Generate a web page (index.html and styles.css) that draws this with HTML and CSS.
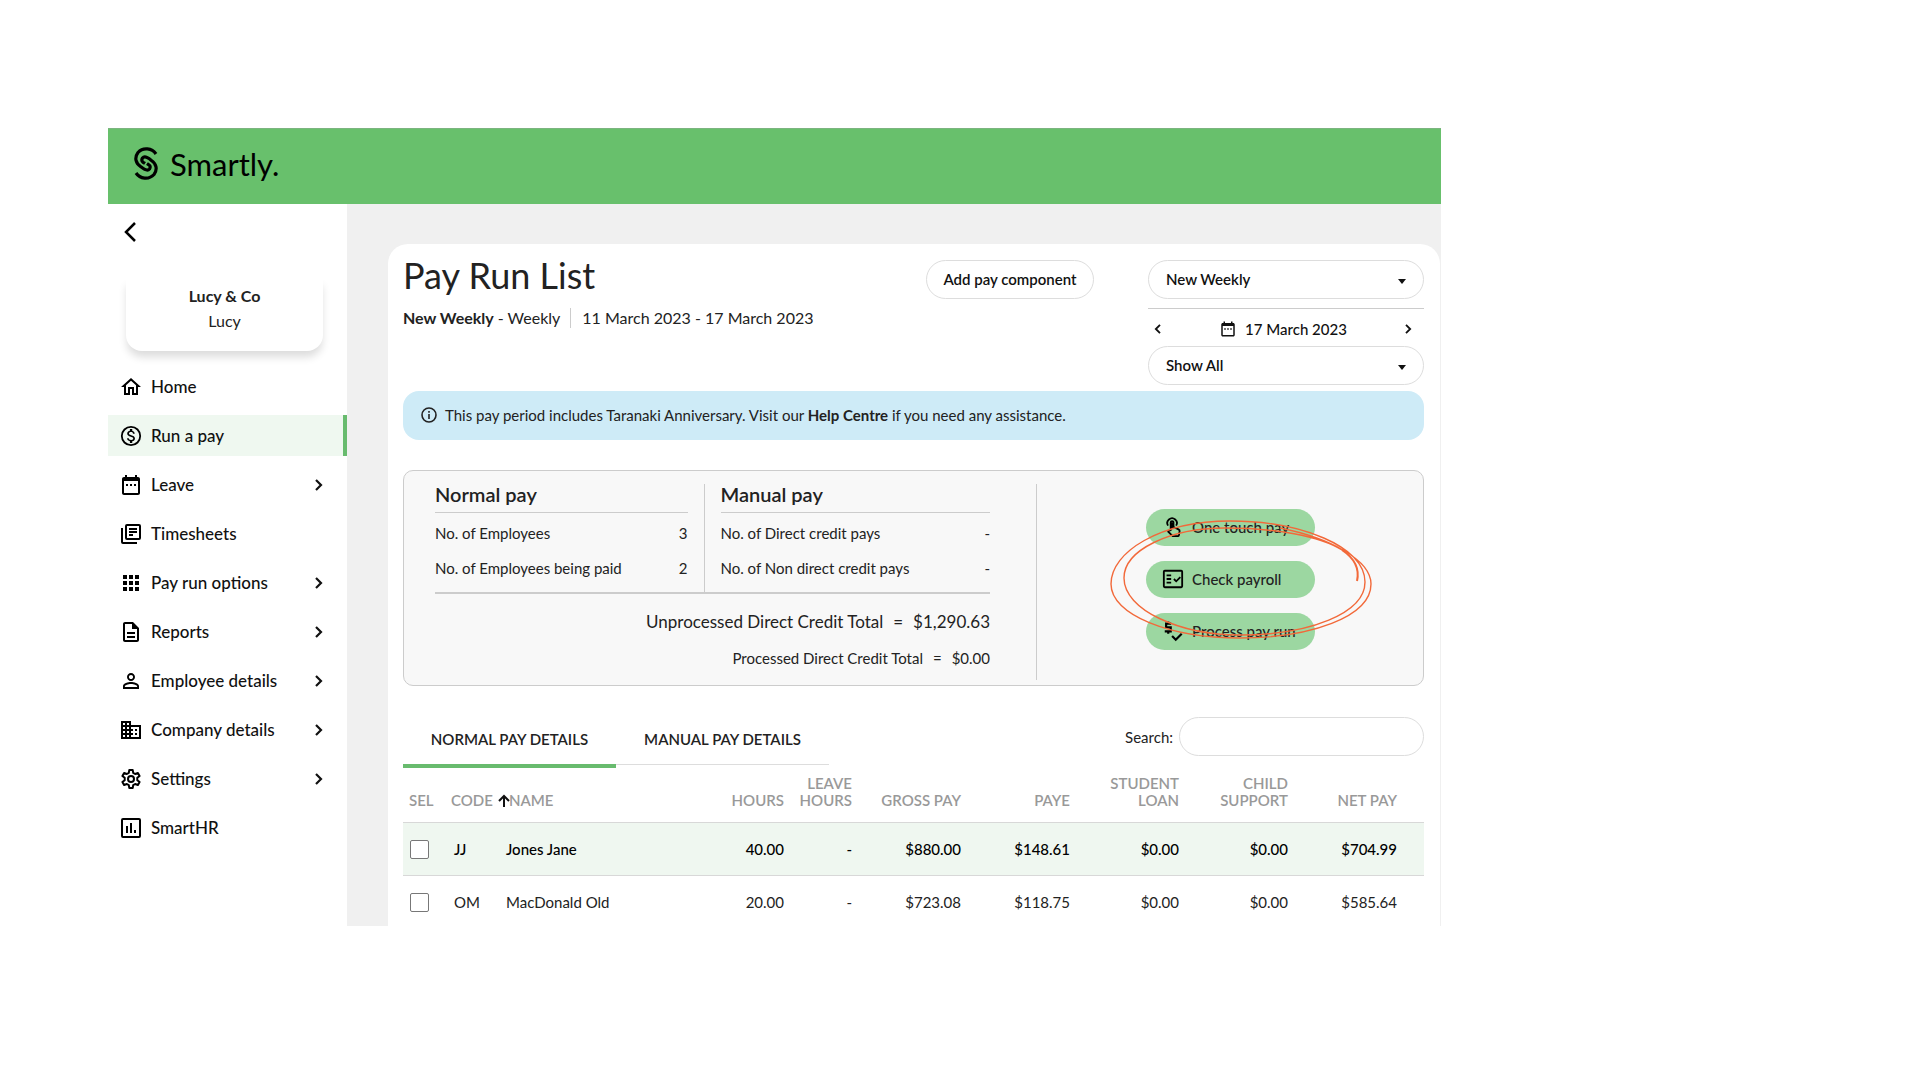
FILE: index.html
```html
<!DOCTYPE html>
<html lang="en">
<head>
<meta charset="utf-8">
<meta name="viewport" content="width=device-width, initial-scale=1">
<title>Pay Run List - Smartly</title>
<link rel="stylesheet" href="styles.css">
</head>
<body>
<svg class="defs" aria-hidden="true">
  <symbol id="chevron" viewBox="0 0 8 12"><path d="M1 1l5 5-5 5" fill="none" stroke="currentColor" stroke-width="2.2"/></symbol>
  <symbol id="caret" viewBox="0 0 8 5"><path d="M0 0h8L4 5z"/></symbol>
  <symbol id="calendar" viewBox="0 0 24 24"><path d="M9 11H7v2h2v-2zm4 0h-2v2h2v-2zm4 0h-2v2h2v-2zM19 4h-1V2h-2v2H8V2H6v2H5c-1.100 0-2 .9-2 2v14c0 1.100.9 2 2 2h14c1.100 0 2-.9 2-2V6c0-1.100-.9-2-2-2zM19 20H5V8h14v12z"/></symbol>
</svg>
<div class="app">
  <header class="topbar">
    <a class="brand" href="#">
      <svg class="brand-mark" viewBox="0 0 24 33" fill="none" stroke="currentColor" stroke-width="3.2" aria-hidden="true">
        <path d="M22 7C18 1 9 0 4 5.500C0 11 2 16.500 6.500 19.500C9 21.500 13 25 15.500 22C17.500 19 14.500 17.500 13 16.500"/>
        <path d="M2 26C6 32 15 33 20 27.500C24 22 22 16.500 17.500 13.500C15 11.500 11 8 8.500 11C6.500 14 9.500 15.500 11 16.500"/>
      </svg>
      <span>Smartly.</span>
    </a>
  </header>
  <div class="body">
    <aside class="sidebar">
      <button class="back" type="button" aria-label="Back">
        <svg viewBox="0 0 12 20" aria-hidden="true"><path d="M11 1L2 10l9 9" fill="none" stroke="currentColor" stroke-width="2.500"/></svg>
      </button>
      <div class="account"><strong>Lucy &amp; Co</strong><span>Lucy</span></div>
      <nav class="menu">
        <a href="#"><svg class="icon" viewBox="0 0 24 24"><path d="M12 5.690l5 4.500V18h-2v-6H9v6H7v-7.810l5-4.500M12 3L2 12h3v8h6v-6h2v6h6v-8h3L12 3z"/></svg><span>Home</span></a>
        <a href="#" class="active" aria-current="page"><svg class="icon" viewBox="0 0 24 24"><circle cx="12" cy="12" r="9.200" fill="none" stroke="currentColor" stroke-width="1.800"/><path d="M12.310 11.140c-1.770-.45-2.340-.94-2.340-1.670 0-.84.79-1.430 2.100-1.430 1.380 0 1.900.66 1.940 1.640h1.710c-.05-1.340-.87-2.570-2.490-2.970V5H10.900v1.690c-1.510.32-2.720 1.300-2.720 2.810 0 1.790 1.490 2.690 3.660 3.210 1.950.46 2.340 1.150 2.340 1.870 0 .53-.39 1.390-2.100 1.390-1.600 0-2.230-.72-2.320-1.640H8.040c.1 1.700 1.360 2.660 2.860 2.970V19h2.340v-1.670c1.520-.29 2.720-1.160 2.730-2.770-.01-2.200-1.900-2.960-3.660-3.420z"/></svg><span>Run a pay</span></a>
        <a href="#"><svg class="icon" viewBox="0 0 24 24"><use href="#calendar"/></svg><span>Leave</span><svg class="chevron"><use href="#chevron"/></svg></a>
        <a href="#"><svg class="icon" viewBox="0 0 24 24" fill="none" stroke="currentColor" stroke-width="2"><rect x="7" y="3" width="14" height="14" rx="1"/><path d="M3 6v14q0 1 1 1h14M10 7h8M10 10h8M10 13h4"/></svg><span>Timesheets</span></a>
        <a href="#"><svg class="icon" viewBox="0 0 24 24"><path d="M4 4h4v4H4zM10 4h4v4h-4zM16 4h4v4h-4zM4 10h4v4H4zM10 10h4v4h-4zM16 10h4v4h-4zM4 16h4v4H4zM10 16h4v4h-4zM16 16h4v4h-4z"/></svg><span>Pay run options</span><svg class="chevron"><use href="#chevron"/></svg></a>
        <a href="#"><svg class="icon" viewBox="0 0 24 24"><path d="M8 16h8v2H8zm0-4h8v2H8zm6-10H6c-1.100 0-2 .9-2 2v16c0 1.100.89 2 2 2h12c1.100 0 2-.9 2-2V8l-6-6zm4 18H6V4h7v5h5v11z"/></svg><span>Reports</span><svg class="chevron"><use href="#chevron"/></svg></a>
        <a href="#"><svg class="icon" viewBox="0 0 24 24"><path d="M12 5.900c1.160 0 2.100.94 2.100 2.100s-.94 2.100-2.100 2.100S9.900 9.160 9.900 8s.94-2.100 2.100-2.100m0 9c2.970 0 6.100 1.460 6.100 2.100v1.100H5.900V17c0-.64 3.130-2.100 6.100-2.100M12 4C9.790 4 8 5.790 8 8s1.790 4 4 4 4-1.790 4-4-1.790-4-4-4zm0 9c-2.670 0-8 1.340-8 4v3h16v-3c0-2.660-5.330-4-8-4z"/></svg><span>Employee details</span><svg class="chevron"><use href="#chevron"/></svg></a>
        <a href="#"><svg class="icon" viewBox="0 0 24 24"><path d="M12 7V3H2v18h20V7H12zM6 19H4v-2h2v2zm0-4H4v-2h2v2zm0-4H4V9h2v2zm0-4H4V5h2v2zm4 12H8v-2h2v2zm0-4H8v-2h2v2zm0-4H8V9h2v2zm0-4H8V5h2v2zm10 12h-8v-2h2v-2h-2v-2h2v-2h-2V9h8v10zm-2-8h-2v2h2v-2zm0 4h-2v2h2v-2z"/></svg><span>Company details</span><svg class="chevron"><use href="#chevron"/></svg></a>
        <a href="#"><svg class="icon" viewBox="0 0 24 24" fill="none" stroke="currentColor" stroke-width="2" stroke-linejoin="round"><path d="M10.300 3h3.400l.5 2.900 1.900 1.100 2.800-1 1.700 2.900-2.300 1.900v2.400l2.300 1.900-1.700 2.900-2.800-1-1.900 1.100-.5 2.900h-3.400l-.5-2.900-1.900-1.100-2.800 1-1.700-2.900 2.300-1.900v-2.400L3.400 8.900l1.700-2.900 2.800 1 1.900-1.100z"/><circle cx="12" cy="12" r="3"/></svg><span>Settings</span><svg class="chevron"><use href="#chevron"/></svg></a>
        <a href="#"><svg class="icon" viewBox="0 0 24 24" fill="none" stroke="currentColor" stroke-width="2"><rect x="3" y="3" width="18" height="18" rx="1"/><path d="M8 17v-7M12 17V7M16 17v-3"/></svg><span>SmartHR</span></a>
      </nav>
    </aside>
    <main class="content">
      <section class="sheet">
        <div class="heading">
          <div class="heading-text">
            <h1>Pay Run List</h1>
            <p class="period"><span><b>New Weekly</b> - Weekly</span><span>11 March 2023 - 17 March 2023</span></p>
          </div>
          <button class="pill add" type="button">Add pay component</button>
          <div class="filters">
            <div class="picker">
              <select class="pill" aria-label="Pay group"><option>New Weekly</option></select>
              <svg class="caret"><use href="#caret"/></svg>
            </div>
            <div class="date">
              <button type="button" aria-label="Previous period"><svg class="prev"><use href="#chevron"/></svg></button>
              <button type="button" class="day"><svg><use href="#calendar"/></svg>17 March 2023</button>
              <button type="button" aria-label="Next period"><svg class="next"><use href="#chevron"/></svg></button>
            </div>
            <div class="picker">
              <select class="pill" aria-label="Employees shown"><option>Show All</option></select>
              <svg class="caret"><use href="#caret"/></svg>
            </div>
          </div>
        </div>

        <p class="notice">
          <svg viewBox="0 0 16 16" aria-hidden="true"><circle cx="8" cy="8" r="7" fill="none" stroke="currentColor" stroke-width="1.600"/><path d="M7.200 7h1.600v5H7.200zM7.200 4h1.600v1.700H7.200z"/></svg>
          <span>This pay period includes Taranaki Anniversary. Visit our <a href="#">Help Centre</a> if you need any assistance.</span>
        </p>

        <div class="summary">
          <div class="figures">
            <div class="groups">
              <div class="group">
                <h2>Normal pay</h2>
                <dl>
                  <div><dt>No. of Employees</dt><dd>3</dd></div>
                  <div><dt>No. of Employees being paid</dt><dd>2</dd></div>
                </dl>
              </div>
              <div class="group">
                <h2>Manual pay</h2>
                <dl>
                  <div><dt>No. of Direct credit pays</dt><dd>-</dd></div>
                  <div><dt>No. of Non direct credit pays</dt><dd>-</dd></div>
                </dl>
              </div>
            </div>
            <div class="totals">
              <p class="main-total"><span>Unprocessed Direct Credit Total</span><span>=</span><span>$1,290.63</span></p>
              <p><span>Processed Direct Credit Total</span><span>=</span><span>$0.00</span></p>
            </div>
          </div>
          <div class="side">
            <div class="actions">
              <button type="button"><svg viewBox="0 0 24 24" fill="none" stroke="currentColor" stroke-width="2"><path d="M6.600 10.500a5.200 5.200 0 1 1 8.800 0"/><path d="M9.500 15.500V7a1.500 1.500 0 0 1 3 0v5l5.500 2.500q1.500.7 1.200 2.200l-.8 4.300q-.2 1-1.200 1h-5.500l-5-5 1-1z" stroke-linejoin="round"/><path d="M11 7v7" stroke-width="3"/></svg>One touch pay</button>
              <button type="button"><svg viewBox="0 0 24 24" fill="none" stroke="currentColor" stroke-width="2"><rect x="2" y="3" width="20" height="18" rx="1"/><path d="M5 8h5M5 12h5M5 16h5M13 12l2.500 2.500L20 10"/></svg>Check payroll</button>
              <button type="button"><svg viewBox="0 0 24 24" fill="none" stroke="currentColor" stroke-width="2.400"><path d="M10 4H4.500v4h5v4.500H3M6.800 1.500V4M6.800 12.500V15M11 17.500l4 4L21.500 15"/></svg>Process pay run</button>
              <svg class="scribble" viewBox="0 0 360 220" fill="none" aria-hidden="true">
                <path class="thick" d="M267 101C270 88 264 78 252 70"/>
                <path d="M252 70C230 56 185 48 135 48C80 48 34 70 34 98C34 130 90 155 150 155C220 155 275 133 275 102C275 66 210 41 140 41C70 41 21 72 21 104C21 135 80 158 150 158C220 158 281 137 281 104C281 80 240 58 190 48"/>
              </svg>
            </div>
          </div>
        </div>

        <div class="toolbar">
          <div class="tabs" role="tablist">
            <button type="button" role="tab" aria-selected="true">NORMAL PAY DETAILS</button>
            <button type="button" role="tab" aria-selected="false">MANUAL PAY DETAILS</button>
          </div>
          <div class="search"><label for="search">Search:</label><input class="pill" id="search" type="text"></div>
        </div>

        <table>
          <colgroup><col class="c-sel"><col class="c-code"><col><col class="c-hours"><col class="c-leave"><col class="c-money"><col class="c-money"><col class="c-money"><col class="c-money"><col class="c-net"></colgroup>
          <thead>
            <tr><th>SEL</th><th><span class="sorted">CODE<svg viewBox="0 0 12 13" aria-label="Sorted ascending"><path d="M6 13V2M1 7l5-5 5 5" fill="none" stroke="currentColor" stroke-width="2"/></svg></span></th><th>NAME</th><th>HOURS</th><th>LEAVE<br>HOURS</th><th>GROSS PAY</th><th>PAYE</th><th>STUDENT<br>LOAN</th><th>CHILD<br>SUPPORT</th><th>NET PAY</th></tr>
          </thead>
          <tbody>
            <tr class="selected"><td><input type="checkbox" aria-label="Select Jones Jane"></td><td>JJ</td><td>Jones Jane</td><td>40.00</td><td>-</td><td>$880.00</td><td>$148.61</td><td>$0.00</td><td>$0.00</td><td>$704.99</td></tr>
            <tr><td><input type="checkbox" aria-label="Select MacDonald Old"></td><td>OM</td><td>MacDonald Old</td><td>20.00</td><td>-</td><td>$723.08</td><td>$118.75</td><td>$0.00</td><td>$0.00</td><td>$585.64</td></tr>
          </tbody>
        </table>
      </section>
    </main>
  </div>
</div>
</body>
</html>
```
FILE: styles.css
```css
* { box-sizing: border-box; }

body {
  margin: 0;
  padding: 128px 479px 154px 108px;
  background: #fff;
  color: #222;
  font: 15px/20px Lato, "Open Sans", sans-serif;
}

h1, h2, p, dl, dd { margin: 0; }
a { color: inherit; text-decoration: none; }
button, input, select { font: inherit; color: inherit; margin: 0; }
button { padding: 0; border: 0; background: none; cursor: pointer; }
svg { display: block; flex: none; fill: currentColor; }
svg[fill="none"] { fill: none; }
.defs { display: none; }

/* Top bar */
.topbar {
  display: flex;
  align-items: center;
  height: 76px;
  padding: 0 26px 6px;
  border-top: 1px solid #7cb480;
  background: #68c06c;
}
.brand { display: flex; align-items: center; gap: 12px; color: #000; font-size: 31px; line-height: 36px; }
.brand-mark { width: 24px; height: 33px; }

.body { display: flex; }

/* Sidebar */
.sidebar { flex: none; width: 239px; padding-top: 18px; }
.back { display: block; margin-left: 16px; width: 14px; height: 20px; color: #000; }
.back svg { width: 12px; height: 20px; }
.account {
  display: flex;
  flex-direction: column;
  align-items: center;
  margin: 36px 24px 0 18px;
  padding: 5px 0 18px;
  border-radius: 0 0 16px 16px;
  box-shadow: 0 7px 8px -1px rgba(0, 0, 0, .14);
  font-size: 16px;
  line-height: 25px;
}
.menu { display: flex; flex-direction: column; gap: 8px; margin-top: 15px; }
.menu a {
  display: flex;
  align-items: center;
  gap: 8px;
  height: 41px;
  padding: 0 20px 0 11px;
  border-right: 4px solid transparent;
  color: #111;
  font-size: 17px;
  font-weight: 500;
}
.menu .active { border-right-color: #68bb6e; background: #eff8f0; }
.icon { width: 24px; height: 24px; color: #000; }
.chevron { width: 8px; height: 12px; margin-left: auto; }

/* Page */
.content { flex: 1; min-width: 0; padding: 40px 1px 0 41px; background: #f0f0f0; }
.sheet { padding: 16px 16px 0 15px; border-radius: 20px 20px 0 0; background: #fff; }

.pill { height: 39px; border: 1px solid #ddd; border-radius: 20px; background: #fff; }

.heading { display: flex; align-items: flex-start; }
.heading-text { flex: 1; }
h1 { font-size: 36px; font-weight: 400; line-height: 30px; }
.period { display: flex; margin-top: 18px; font-size: 16px; }
.period span + span { margin-left: 10px; padding-left: 11px; border-left: 1px solid #ccc; }
.add { width: 168px; padding-bottom: 2px; color: #111; font-size: 15px; font-weight: 600; }
.filters { width: 276px; margin-left: 54px; font-weight: 600; color: #111; }
.picker { position: relative; }
.picker select { display: block; width: 100%; padding: 0 17px 2px; appearance: none; }
.caret { position: absolute; right: 18px; top: 19px; width: 8px; height: 5px; }
.date {
  display: flex;
  justify-content: space-between;
  align-items: center;
  height: 38px;
  margin-top: 9px;
  padding: 2px 12px 0 6px;
  border-top: 1px solid #ccc;
}
.date .day { display: flex; align-items: center; gap: 8px; font-weight: 500; }
.day svg { width: 18px; height: 18px; }
.prev, .next { width: 7px; height: 10px; }
.prev { transform: scaleX(-1); }

.notice {
  display: flex;
  align-items: center;
  gap: 8px;
  min-height: 49px;
  margin-top: 6px;
  padding: 0 18px 2px;
  border-radius: 16px;
  background: #ceebf7;
}
.notice svg { width: 16px; height: 16px; }
.notice a { font-weight: 700; }

/* Totals panel */
.summary {
  display: grid;
  grid-template-columns: 602fr 386fr;
  margin-top: 30px;
  padding: 13px 0 5px 31px;
  border: 1px solid #ccc;
  border-radius: 10px;
  background: #f8f8f8;
}
.figures { padding-right: 46px; border-right: 1px solid #ccc; }
.groups { display: grid; grid-template-columns: 270fr 286fr; border-bottom: 2px solid #ccc; }
.group { padding-bottom: 6px; }
.group:first-child { padding-right: 16px; border-right: 1px solid #ccc; }
.group + .group { padding-left: 16px; }
h2 { padding-bottom: 8px; border-bottom: 1px solid #ccc; font-size: 20px; font-weight: 600; line-height: 20px; }
dl { padding-top: 3px; }
dl div { display: flex; justify-content: space-between; line-height: 35px; }
.totals { padding: 10px 0 4px; }
.totals p { display: flex; justify-content: flex-end; gap: 10px; line-height: 36px; }
.totals .main-total { font-size: 17px; }
.side { padding: 25px 0 0 109px; }
.actions { position: relative; display: flex; flex-direction: column; gap: 15px; width: 169px; }
.actions button {
  display: flex;
  align-items: center;
  gap: 8px;
  height: 37px;
  padding: 0 16px 2px;
  border-radius: 19px;
  background: #9cd7a1;
  font-weight: 500;
}
.actions button svg { width: 22px; height: 22px; color: #000; }
.scribble { position: absolute; left: -56px; top: -29px; width: 360px; height: 220px; stroke: #f2693a; stroke-width: 1.4px; pointer-events: none; }
.scribble .thick { stroke-width: 2px; }

/* Tabs and search */
.toolbar { display: flex; justify-content: space-between; align-items: flex-start; margin-top: 31px; }
.tabs { display: flex; align-items: flex-start; }
.tabs button {
  width: 213px;
  height: 51px;
  padding-bottom: 3px;
  border-bottom: 4px solid #68bb6e;
  font-weight: 600;
}
.tabs [aria-selected="false"] { height: 48px; border-bottom: 1px solid #ddd; }
.search { display: flex; align-items: center; gap: 6px; }
.search input { width: 245px; padding: 0 16px; }

/* Pay table */
table { width: 100%; border-spacing: 0; table-layout: fixed; }
.c-sel { width: 48px; }
.c-code { width: 55px; }
.c-hours { width: 60px; }
.c-leave { width: 68px; }
.c-money { width: 109px; }
.c-net { width: 136px; }
th, td { padding: 0; border-bottom: 1px solid #d8d8d8; text-align: right; white-space: nowrap; }
th { padding: 7px 0 13px; color: #999; font-weight: 600; line-height: 17px; vertical-align: bottom; }
td { padding: 16px 0; }
th:nth-child(-n+3), td:nth-child(-n+3) { text-align: left; }
th:first-child { padding-left: 6px; }
td:first-child { padding-left: 7px; }
td:nth-child(2) { padding-left: 3px; }
th:nth-child(3) { padding-left: 3px; }
th:last-child, td:last-child { padding-right: 27px; }
.sorted { display: flex; align-items: center; gap: 5px; }
.sorted svg { width: 12px; height: 13px; color: #111; }
.selected { background: #eff7f0; color: #000; font-weight: 500; }
tbody tr:last-child td { padding-bottom: 14px; border-bottom: 0; }
td input { display: block; width: 19px; height: 19px; appearance: none; border: 1px solid #777; border-radius: 2px; background: #fff; }
```
